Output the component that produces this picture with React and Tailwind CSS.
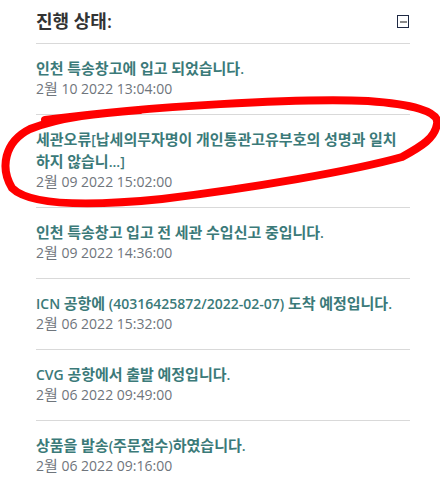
import React from "react";

const items = [
  { title: "인천 특송창고에 입고 되었습니다.", date: "2월 10 2022 13:04:00" },
  { title: "세관오류[납세의무자명이 개인통관고유부호의 성명과 일치 하지 않습니...]", date: "2월 09 2022 15:02:00" },
  { title: "인천 특송창고 입고 전 세관 수입신고 중입니다.", date: "2월 09 2022 14:36:00" },
  { title: "ICN 공항에 (40316425872/2022-02-07) 도착 예정입니다.", date: "2월 06 2022 15:32:00" },
  { title: "CVG 공항에서 출발 예정입니다.", date: "2월 06 2022 09:49:00" },
  { title: "상품을 발송(주문접수)하였습니다.", date: "2월 06 2022 09:16:00" },
];

function Ko({ text }) {
  const parts = text.split(/([\uAC00-\uD7A3]+)/);
  return (
    <>
      {parts.map((p, i) =>
        /[\uAC00-\uD7A3]/.test(p) ? (
          <span key={i} className="text-[15px] leading-[14px]">{p}</span>
        ) : (
          <React.Fragment key={i}>{p}</React.Fragment>
        )
      )}
    </>
  );
}

export default function App() {
  return (
    <div
      className="relative w-[440px] h-[484px] bg-white overflow-hidden pl-[36px] pr-[30px]"
      style={{ fontFamily: '"Open Sans","Noto Sans CJK KR",sans-serif' }}
    >
      <div className="flex items-center justify-between h-[44px] border-b border-[#d9d9d9]">
        <h2 className="text-[18px] font-semibold text-[#333]">진행 상태:</h2>
        <div className="w-[12px] h-[13px] border border-[#1f2a44] flex items-center justify-center mr-[1px]">
          <div className="w-[7px] h-[2px] bg-[#8a8a8a]" />
        </div>
      </div>
      {items.map((it, i) => (
        <div
          key={i}
          className={`pt-[14px] pb-[16px] ${i < items.length - 1 ? "border-b border-[#d9d9d9]" : ""}`}
        >
          <div className="text-[14px] leading-[22px] font-semibold text-[#3b7a79] pr-[6px] break-keep">
            <Ko text={it.title} />
          </div>
          <div className="text-[14px] leading-[18px] text-[#6f757c]">
            <Ko text={it.date} />
          </div>
        </div>
      ))}
      <svg className="absolute left-0 top-0 pointer-events-none" width="440" height="484" viewBox="0 0 440 484">
        <path
          d="M 45 120 C 150 106, 300 98, 368 101 C 410 104, 440 111, 437 124 C 435 138, 422 146, 402 157 C 352 171, 252 188, 162 199 C 92 206, 30 206, 12 188 C 0 168, 4 142, 30 129 C 60 117, 100 113, 140 110"
          fill="none"
          stroke="#ff0000"
          strokeWidth="8"
          strokeLinecap="round"
          strokeLinejoin="round"
        />
      </svg>
    </div>
  );
}
